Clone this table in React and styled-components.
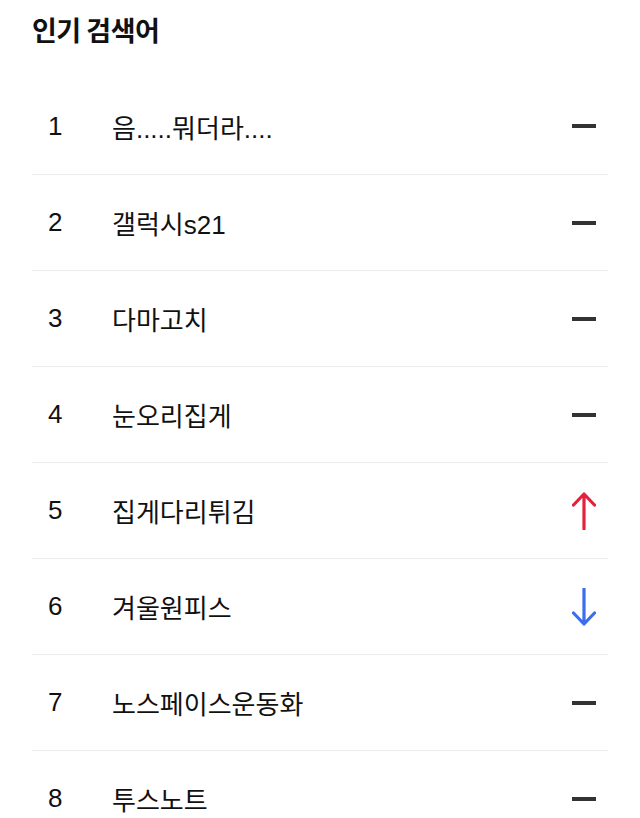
import React from "react";
import styled, { createGlobalStyle } from "styled-components";

const Global = createGlobalStyle`
  html, body { margin: 0; padding: 0; background: #fff; }
  body {
    font-family: "Liberation Sans", "Noto Sans CJK KR", sans-serif;
    color: #111;
    -webkit-font-smoothing: antialiased;
  }
`;

const Page = styled.div`
  padding: 0 32px;
  height: 818px;
  overflow: hidden;
  box-sizing: border-box;
`;

const Title = styled.h2`
  margin: 0;
  padding-top: 10px;
  height: 78px;
  box-sizing: border-box;
  font-family: "Noto Sans CJK KR", sans-serif;
  font-size: 27px;
  font-weight: 700;
  line-height: 40px;
  letter-spacing: -0.5px;
  color: #111;
`;

const List = styled.ol`
  list-style: none;
  margin: 0;
  padding: 0;
`;

const Row = styled.li`
  display: flex;
  align-items: center;
  height: 96px;
  padding: 0 12px 0 16px;
  box-sizing: border-box;
  border-top: ${(p) => (p.$first ? "none" : "1px solid #ececec")};
`;

const Rank = styled.span`
  width: 64px;
  flex: none;
  font-family: "Liberation Sans", sans-serif;
  font-size: 26px;
  color: #111;
`;

const Keyword = styled.span`
  flex: 1;
  font-family: "Liberation Sans", "Noto Sans CJK KR", sans-serif;
  font-size: 26px;
  color: #111;
`;

const Trend = styled.span`
  width: 24px;
  height: 40px;
  display: flex;
  align-items: center;
  justify-content: center;
  flex: none;
`;

const Dash = styled.span`
  display: block;
  width: 24px;
  height: 4px;
  background: #333;
`;

const Arrow = ({ dir }) => {
  const up = dir === "up";
  const color = up ? "#e4213d" : "#3a6df0";
  return (
    <svg width="24" height="38" viewBox="0 0 24 38" fill="none">
      {up ? (
        <path d="M12 2 V37 M1.5 13 L12 2 L22.5 13" stroke={color} strokeWidth="3.2" strokeLinecap="round" strokeLinejoin="round" />
      ) : (
        <path d="M12 1 V36 M1.5 25 L12 36 L22.5 25" stroke={color} strokeWidth="3.2" strokeLinecap="round" strokeLinejoin="round" />
      )}
    </svg>
  );
};

const items = [
  { k: "음.....뭐더라....", t: "same" },
  { k: "갤럭시s21", t: "same" },
  { k: "다마고치", t: "same" },
  { k: "눈오리집게", t: "same" },
  { k: "집게다리튀김", t: "up" },
  { k: "겨울원피스", t: "down" },
  { k: "노스페이스운동화", t: "same" },
  { k: "투스노트", t: "same" },
];

export default function App() {
  return (
    <>
      <Global />
      <Page>
        <Title>인기 검색어</Title>
        <List>
          {items.map((it, i) => (
            <Row key={i} $first={i === 0}>
              <Rank>{i + 1}</Rank>
              <Keyword>{it.k}</Keyword>
              <Trend>{it.t === "same" ? <Dash /> : <Arrow dir={it.t} />}</Trend>
            </Row>
          ))}
        </List>
      </Page>
    </>
  );
}
